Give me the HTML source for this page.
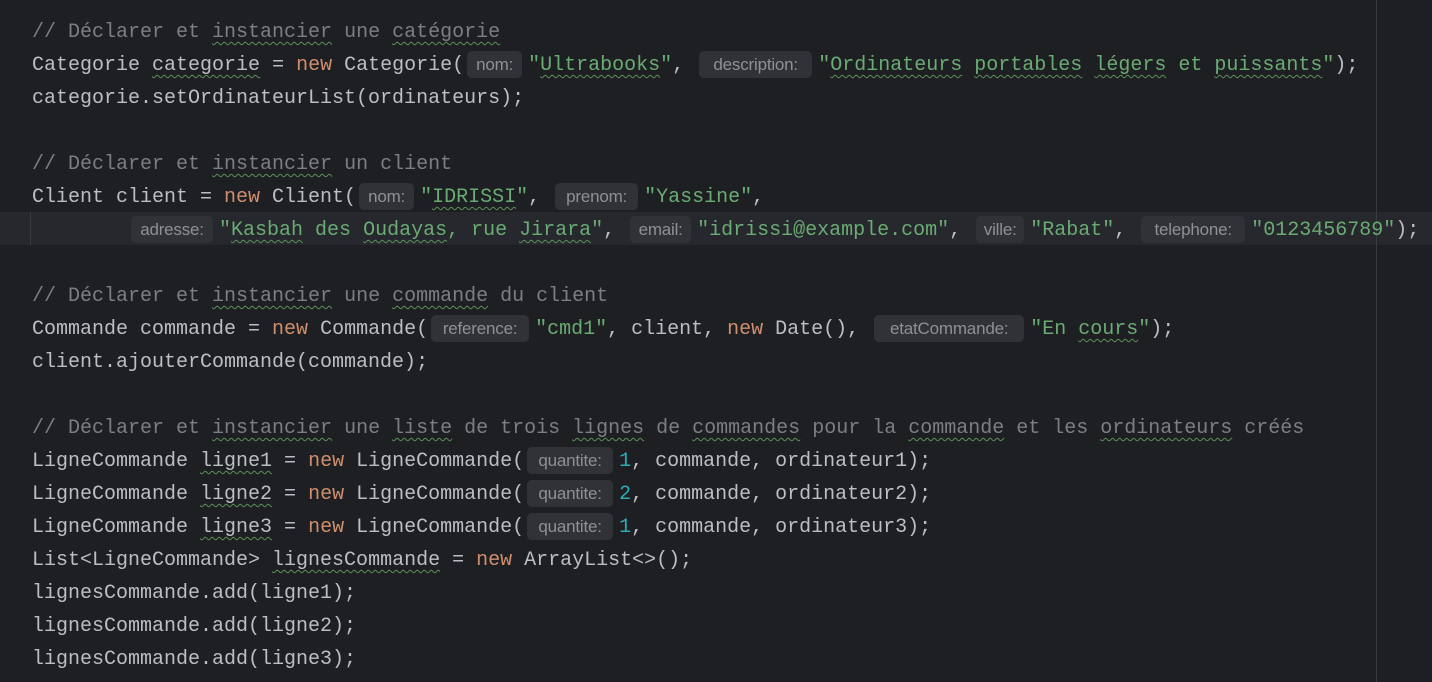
<!DOCTYPE html>
<html><head><meta charset="utf-8"><style>
html,body{margin:0;padding:0;background:#1e1f22;width:1432px;height:682px;overflow:hidden}
.ed{position:relative;width:1432px;height:682px;font-family:"Liberation Mono",monospace;font-size:20px;color:#bcbec4}
.margin{position:absolute;left:1376px;top:0;width:1px;height:682px;background:#393b40}
.cur{position:absolute;left:0;top:212px;width:1432px;height:33px;background:#26282e}
.guide{position:absolute;left:30px;top:212px;width:1px;height:33px;background:#393b40}
.code{position:absolute;left:32px;top:16px;line-height:33px}
.l{height:33px;white-space:pre}
.k{color:#cf8e6d}.s{color:#6aab73}.c{color:#7a7e85}.n{color:#2aacb8}
.w{text-decoration:underline wavy #5c8f5c;text-decoration-thickness:1px;text-underline-offset:4px}
.h{display:inline-block;vertical-align:top;margin:2px 6px 0 3px;height:27px;line-height:27px;background:#303236;border-radius:5px;color:#8e9096;font-family:"Liberation Sans",sans-serif;font-size:17px;text-align:center;letter-spacing:-0.2px}
</style></head><body><div class="ed">
<div class="cur"></div><div class="guide"></div><div class="margin"></div>
<div class="code"><div class="l"><span class="c">// Déclarer et <span class="w">instancier</span> une <span class="w">catégorie</span></span></div><div class="l">Categorie <span class="w">categorie</span> = <span class="k">new</span> Categorie(<span class="h" style="width:55px">nom:</span><span class="s">"<span class="w">Ultrabooks</span>"</span>, <span class="h" style="width:113px">description:</span><span class="s">"<span class="w">Ordinateurs</span> <span class="w">portables</span> <span class="w">légers</span> et <span class="w">puissants</span>"</span>);</div><div class="l">categorie.setOrdinateurList(ordinateurs);</div><div class="l"> </div><div class="l"><span class="c">// Déclarer et <span class="w">instancier</span> un client</span></div><div class="l">Client client = <span class="k">new</span> Client(<span class="h" style="width:55px">nom:</span><span class="s">"<span class="w">IDRISSI</span>"</span>, <span class="h" style="width:83px">prenom:</span><span class="s">"Yassine"</span>,</div><div class="l">        <span class="h" style="width:82px">adresse:</span><span class="s">"<span class="w">Kasbah</span> des <span class="w">Oudayas</span>, rue <span class="w">Jirara</span>"</span>, <span class="h" style="width:61px">email:</span><span class="s">"idrissi@example.com"</span>, <span class="h" style="width:48px">ville:</span><span class="s">"Rabat"</span>, <span class="h" style="width:104px">telephone:</span><span class="s">"0123456789"</span>);</div><div class="l"> </div><div class="l"><span class="c">// Déclarer et <span class="w">instancier</span> une <span class="w">commande</span> du client</span></div><div class="l">Commande commande = <span class="k">new</span> Commande(<span class="h" style="width:98px">reference:</span><span class="s">"cmd1"</span>, client, <span class="k">new</span> Date(), <span class="h" style="width:150px">etatCommande:</span><span class="s">"En <span class="w">cours</span>"</span>);</div><div class="l">client.ajouterCommande(commande);</div><div class="l"> </div><div class="l"><span class="c">// Déclarer et <span class="w">instancier</span> une <span class="w">liste</span> de trois <span class="w">lignes</span> de <span class="w">commandes</span> pour la <span class="w">commande</span> et les <span class="w">ordinateurs</span> créés</span></div><div class="l">LigneCommande <span class="w">ligne1</span> = <span class="k">new</span> LigneCommande(<span class="h" style="width:86px">quantite:</span><span class="n">1</span>, commande, ordinateur1);</div><div class="l">LigneCommande <span class="w">ligne2</span> = <span class="k">new</span> LigneCommande(<span class="h" style="width:86px">quantite:</span><span class="n">2</span>, commande, ordinateur2);</div><div class="l">LigneCommande <span class="w">ligne3</span> = <span class="k">new</span> LigneCommande(<span class="h" style="width:86px">quantite:</span><span class="n">1</span>, commande, ordinateur3);</div><div class="l">List&lt;LigneCommande&gt; <span class="w">lignesCommande</span> = <span class="k">new</span> ArrayList&lt;&gt;();</div><div class="l">lignesCommande.add(ligne1);</div><div class="l">lignesCommande.add(ligne2);</div><div class="l">lignesCommande.add(ligne3);</div></div>
</div></body></html>
